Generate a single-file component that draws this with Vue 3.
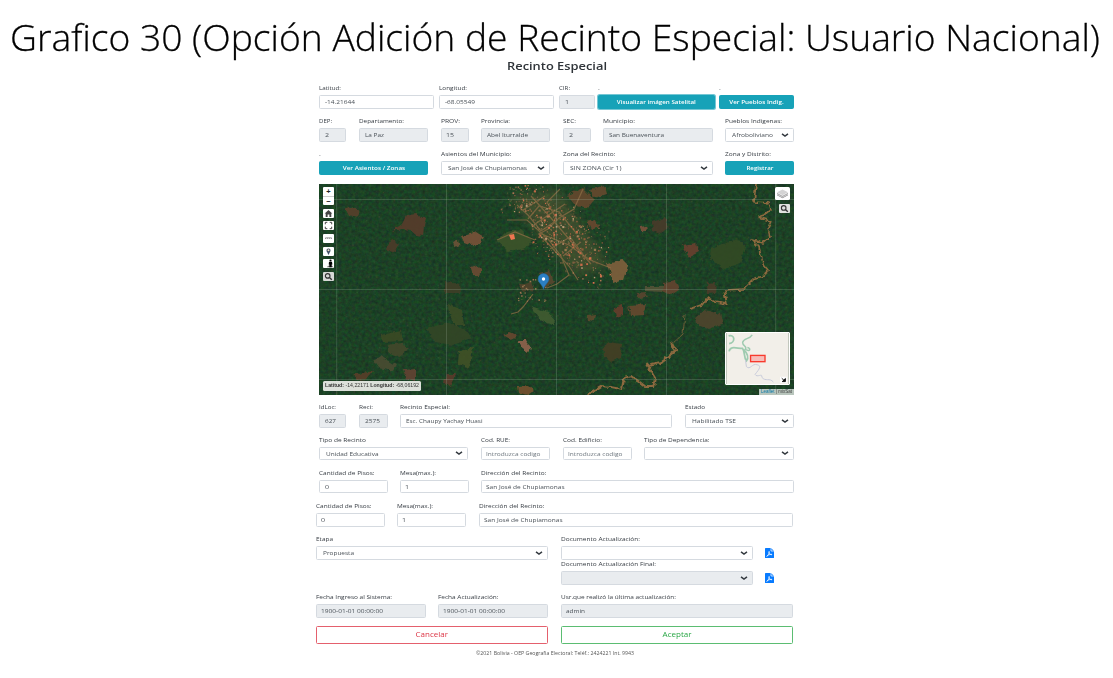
<script setup>
// Scales a text run horizontally so that it takes the given width.
const vFit = {
  mounted(el, { value }) {
    const w = el.getBoundingClientRect().width
    if (w) el.style.transform = `scaleX(${value ? value / w : 1.2})`
  }
}

// Fields: x and w are the column start and width; lw and vw are text widths.
const rows = [
  { y: 82, fields: [
    { x: 319, w: 115, label: 'Latitud:', lw: 22, value: '-14.21644', vw: 30 },
    { x: 439, w: 115, label: 'Longitud:', lw: 28, value: '-68.05549', vw: 30 },
    { x: 559, w: 36, label: 'CIR:', lw: 11, value: '1', off: true },
    { x: 598, w: 117, label: '.', value: 'Visualizar imágen Satelital', vw: 79, kind: 'btn', focus: true },
    { x: 718.5, w: 75.5, label: '.', value: 'Ver Pueblos Indig.', vw: 54.5, kind: 'btn' }
  ] },
  { y: 115, fields: [
    { x: 319, w: 27, label: 'DEP:', lw: 13, value: '2', off: true },
    { x: 359, w: 69, label: 'Departamento:', lw: 45, value: 'La Paz', vw: 19, off: true },
    { x: 440.5, w: 28, label: 'PROV:', lw: 19, value: '15', vw: 8, off: true },
    { x: 481, w: 69, label: 'Provincia:', lw: 29, value: 'Abel Iturralde', vw: 41, off: true },
    { x: 563, w: 28, label: 'SEC:', lw: 13, value: '2', off: true },
    { x: 603, w: 110, label: 'Municipio:', lw: 32, value: 'San Buenaventura', vw: 55, off: true },
    { x: 725.4, w: 68.5, label: 'Pueblos Indigenas:', lw: 57, value: 'Afroboliviano', vw: 41, kind: 'select' }
  ] },
  { y: 148, fields: [
    { x: 319, w: 109, label: '.', value: 'Ver Asientos / Zonas', vw: 62.5, kind: 'btn' },
    { x: 440.5, w: 109.5, label: 'Asientos del Municipio:', lw: 70.5, value: 'San José de Chupiamonas', vw: 79, kind: 'select' },
    { x: 563, w: 150, label: 'Zona del Recinto:', lw: 52.5, value: 'SIN ZONA (Cir 1)', vw: 51.5, kind: 'select' },
    { x: 725.4, w: 68.5, label: 'Zona y Distrito:', lw: 46, value: 'Registrar', vw: 27, kind: 'btn' }
  ] },
  { y: 401, fields: [
    { x: 319, w: 27, label: 'IdLoc:', lw: 17, value: '627', vw: 11, off: true },
    { x: 359, w: 28.5, label: 'Reci:', lw: 14, value: '2575', vw: 15, off: true },
    { x: 400, w: 272, label: 'Recinto Especial:', lw: 50, value: 'Esc. Chaupy Yachay Huasi', vw: 76.5 },
    { x: 685, w: 109, label: 'Estado', lw: 20, value: 'Habilitado TSE', vw: 44, kind: 'select' }
  ] },
  { y: 433.5, fields: [
    { x: 319, w: 149.4, label: 'Tipo de Recinto', lw: 47, value: 'Unidad Educativa', vw: 52.5, kind: 'select' },
    { x: 481, w: 69, label: 'Cod. RUE:', lw: 29, value: 'Introduzca codigo', vw: 54.5, hint: true },
    { x: 563, w: 69, label: 'Cod. Edificio:', lw: 39, value: 'Introduzca codigo', vw: 54.5, hint: true },
    { x: 644.4, w: 149.5, label: 'Tipo de Dependencia:', lw: 65.5, kind: 'select' }
  ] },
  { y: 466.5, fields: [
    { x: 319, w: 68.6, label: 'Cantidad de Pisos:', lw: 55.5, value: '0' },
    { x: 399.6, w: 69, label: 'Mesa(max.):', lw: 36, value: '1' },
    { x: 481, w: 313, label: 'Dirección del Recinto:', lw: 65.5, value: 'San José de Chupiamonas', vw: 78.5 }
  ] },
  { y: 500, fields: [
    { x: 315.6, w: 69, label: 'Cantidad de Pisos:', lw: 55.5, value: '0' },
    { x: 397, w: 69, label: 'Mesa(max.):', lw: 36, value: '1' },
    { x: 479, w: 314, label: 'Dirección del Recinto:', lw: 65.5, value: 'San José de Chupiamonas', vw: 78.5 }
  ] },
  { y: 533.4, fields: [
    { x: 315.6, w: 232, label: 'Etapa', lw: 17, value: 'Propuesta', vw: 31, kind: 'select' },
    { x: 561, w: 191.6, label: 'Documento Actualización:', lw: 79, kind: 'select', pdf: true }
  ] },
  { y: 558, fields: [
    { x: 561, w: 191.6, label: 'Documento Actualización Final:', lw: 95, kind: 'select', off: true, pdf: true }
  ] },
  { y: 591, fields: [
    { x: 315.6, w: 110, label: 'Fecha Ingreso al Sistema:', lw: 76, value: '1900-01-01 00:00:00', vw: 62, off: true },
    { x: 438, w: 110, label: 'Fecha Actualización:', lw: 60.5, value: '1900-01-01 00:00:00', vw: 62, off: true },
    { x: 561, w: 232, label: 'Usr.que realizó la última actualización:', lw: 115, value: 'admin', vw: 19, off: true }
  ] }
]
// Gaps between rows and between fields come from the starts and sizes above.
const H = 26.5
const layout = (list, from) => list.map((r, i) => {
  const prev = i ? list[i - 1].y + H : from
  let edge = 315
  const fields = r.fields.map(f => {
    const ml = f.x - edge
    edge = f.x + f.w
    return { ...f, ml }
  })
  return { fields, mt: r.y - prev }
})
const sections = [layout(rows.slice(0, 3), 82), layout(rows.slice(3), 394.5)]

// Seeded random source for the satellite texture.
let seed = 11
const rnd = () => ((seed = (seed * 16807) % 2147483647) / 2147483647)
const pick = a => a[Math.floor(rnd() * a.length)]
const houses = []
for (let i = 0; i < 560; i++) {
  const t = rnd()
  const x = 192 + t * 84 + (rnd() - 0.5) * 34
  const y = 14 + t * 62 + (rnd() - 0.5) * 56
  if (y < 1 || (x < 212 && y > 30)) continue
  houses.push({ x, y, s: 0.6 + rnd() * rnd() * 2, c: pick(['#a97652', '#c96b48', '#96784f', '#7d6040', '#b89a78', '#8f5c3c', '#d4714c', '#77623e']) })
}
for (let i = 0; i < 34; i++) houses.push({ x: 198 + rnd() * 30, y: 94 + rnd() * 24, s: 0.6 + rnd(), c: '#9a7650' })
const specks = Array.from({ length: 1300 }, () => ({ x: rnd() * 475, y: rnd() * 211, s: 0.5 + rnd() * 1.2, c: pick(['#2f6335', '#15351f', '#33552f', '#163822', '#4a4c30']) }))

const patches = [
  ['26,24 33,22 41,28 38,34 30,32', '#58402b'],
  ['73,47 83,40 87,32 96,30 107,34 105,42 104,52 97,51 91,46 84,45', '#583c2b'],
  ['66,65 73,56 80,60 76,68', '#4c3b29'],
  ['142,52 148,51 157,48 165,53 161,60 153,61 145,58', '#795239'],
  ['134,58 140,55 141,61 136,63', '#6d5338'],
  ['151,83 158,81 163,86 160,92 154,91', '#6c4b34'],
  ['126,98 141,100 142,109 126,109', '#3f3f27'],
  ['129,120 143,126 145,141 136,141 130,131', '#3b4d26'],
  ['108,144 130,139 147,146 153,154 134,161 115,158', '#334626'],
  ['62,151 82,147 84,157 63,158', '#3b4a24'],
  ['68,161 83,159 90,165 79,173 70,170', '#43482b'],
  ['55,177 62,172 77,181 74,187 60,184', '#4a4c32'],
  ['140,167 154,164 150,184 139,180', '#415126'],
  ['84,186 96,185 96,198 87,195', '#624333'],
  ['127,190 137,190 131,202 125,199', '#593b2b'],
  ['33,191 54,187 48,195 39,196', '#593e29'],
  ['184,151 191,148 198,151 193,156', '#67472f'],
  ['199,156 206,156 213,165 209,168 201,162', '#90634d'],
  ['199,202 209,201 216,207 210,211 200,209', '#76512f'],
  ['212,122 229,128 237,138 234,142 218,133', '#415c31'],
  ['178,57 187,48 202,46 213,56 207,64 190,68', '#3d542a'],
  ['220,89 231,86 235,99 226,104', '#59472f'],
  ['288,80 304,76 309,81 304,96 295,99 291,90', '#80603d'],
  ['248,11 264,4 275,15 268,24 255,20', '#65482d'],
  ['271,5 286,2 288,10 275,14', '#66492e'],
  ['268,38 277,36 280,43 272,46', '#69482f'],
  ['333,38 346,34 350,43 341,50 334,47', '#493b2a'],
  ['320,42 327,41 328,47 322,47', '#7b523c'],
  ['363,61 377,59 380,68 370,73', '#69402f'],
  ['392,64 401,61 418,55 426,62 421,79 405,85 391,74', '#334a24'],
  ['344,99 357,97 360,106 352,111 344,107', '#64442f'],
  ['326,103 344,103 344,108 326,107', '#545337'],
  ['309,121 328,120 325,131 311,132', '#67492f'],
  ['295,124 304,121 304,131 297,133', '#663d2c'],
  ['318,109 326,108 329,113 319,114', '#5a452f'],
  ['377,133 386,126 401,130 404,140 390,145 378,140', '#4f452d'],
  ['284,162 290,158 303,160 301,174 292,178 285,173', '#453f24'],
  ['388,99 397,98 396,109 389,110', '#4b3c29'],
  ['268,131 277,130 276,137 269,136', '#5b4a2d'],
  ['200,101 213,98 215,105 203,108', '#50432b']
]
const roads = [
  'M264 5L255 25L240 34L229 45L220 50L235 66L250 82L259 96',
  'M220 49L250 61L271 76L292 84', 'M198 21L209 31L222 47L238 36L228 18L241 5',
  'M188 36L208 36L229 55L242 72L250 91L238 100L228 104',
  'M209 35L220 22L240 28L258 50', 'M178 56L196 48L216 56', 'M214 110L204 123L199 128L192 130',
  'M231 65L251 53L264 70', 'M212 12L232 34L256 62L272 80', 'M204 26L226 12M216 40L246 20M244 72L262 58'
]
const river = 'M268 211L283 202L292 203L303 205L305 194L313 192L327 203L334 203L336 194L328 181L342 178L357 167L352 158'
const riverTop = 'M437 0L435 18L450 19L452 25L445 31L439 33L452 37L449 44L451 53L444 59L433 56L440 63L444 80L449 86L446 92L436 94L425 105L405 106L408 120L396 118L388 114L383 121L371 125'
</script>

<template>
  <div class="page">
    <h1><span v-fit="1090">Grafico 30 (Opción Adición de Recinto Especial: Usuario Nacional)</span></h1>
    <h2><span v-fit="100">Recinto Especial</span></h2>

    <main>
      <template v-for="(sec, si) in sections" :key="si">
        <div v-for="(r, ri) in sec" :key="ri" class="row" :style="{ marginTop: r.mt + 'px' }">
          <template v-for="(f, fi) in r.fields" :key="fi">
            <div class="field" :style="{ marginLeft: f.ml + 'px', width: f.w + 'px' }">
              <label><span v-fit="f.lw">{{ f.label }}</span></label>
              <div class="control" :class="[f.kind, { off: f.off, hint: f.hint, focus: f.focus }]">
                <span v-fit="f.vw">{{ f.value }}</span>
                <svg v-if="f.kind === 'select'" class="chev" viewBox="0 0 8 6"><path d="M1 1.8L4 4L7 1.8" /></svg>
              </div>
            </div>
            <svg v-if="f.pdf" class="pdf" viewBox="0 0 9 10">
              <path d="M.6 0H6L9 3V9.400Q9 10 8.400 10H.6Q0 10 0 9.400V.6Q0 0 .6 0Z" fill="#087bff" />
              <path d="M6 0V3H9" fill="none" stroke="#fff" stroke-width=".7" />
              <path d="M1.700 8.300C3 7.700 4.700 4.700 4.200 3.500C3.400 3.200 3.600 6.500 7 6.800C7.200 5.800 4 6.200 1.700 8.300Z" fill="none" stroke="#fff" stroke-width=".75" />
            </svg>
          </template>
        </div>

        <div v-if="si === 0" class="map">
          <svg class="ground" viewBox="0 0 475 211" preserveAspectRatio="none">
            <defs>
              <filter id="forest" x="0" y="0" width="100%" height="100%" color-interpolation-filters="sRGB">
                <feTurbulence type="fractalNoise" baseFrequency="0.3" numOctaves="4" seed="4" />
                <feColorMatrix values=".1 0 0 0 .06  0 .17 0 0 .17  0 0 .08 0 .105  0 0 0 0 1" />
              </filter>
              <filter id="rough" x="-5%" y="-5%" width="110%" height="110%" color-interpolation-filters="sRGB">
                <feTurbulence type="fractalNoise" baseFrequency="0.2" numOctaves="2" seed="8" result="n" />
                <feDisplacementMap in="SourceGraphic" in2="n" scale="5" xChannelSelector="R" yChannelSelector="G" />
                <feGaussianBlur stdDeviation=".6" />
              </filter>
              <filter id="soft" color-interpolation-filters="sRGB"><feGaussianBlur stdDeviation=".45" /></filter>
              <filter id="haze" color-interpolation-filters="sRGB"><feGaussianBlur stdDeviation="5" /></filter>
            </defs>
            <rect width="475" height="211" fill="#1d4126" />
            <rect width="475" height="211" filter="url(#forest)" />
            <g filter="url(#soft)" opacity=".45">
              <rect v-for="(s, i) in specks" :key="i" :x="s.x" :y="s.y" :width="s.s" :height="s.s" :fill="s.c" />
            </g>
            <path d="M190 12L240 6L290 82L258 92L214 44Z" fill="#5d5a35" opacity=".5" filter="url(#haze)" />
            <g filter="url(#rough)" opacity=".9">
              <polygon v-for="(p, i) in patches" :key="i" :points="p[0]" :fill="p[1]" />
            </g>
            <g fill="none" stroke="#8d6d45" stroke-width="1.200" opacity=".75" filter="url(#soft)">
              <path v-for="(d, i) in roads" :key="i" :d="d" />
            </g>
            <g fill="none" stroke="#8c693f" stroke-linejoin="round" filter="url(#rough)">
              <path :d="river" stroke-width="2.200" />
              <path :d="riverTop" stroke-width="1.700" />
              <path d="M366 131L364 150L352 161" stroke-width=".7" />
            </g>
            <g filter="url(#soft)">
              <rect v-for="(s, i) in houses" :key="i" :x="s.x" :y="s.y" :width="s.s" :height="s.s" :fill="s.c" />
              <path d="M190 51l5-1 1 5-4 1z" fill="#ef7550" />
            </g>
            <path d="M17.700 0V211M127.500 0V211M237.500 0V211M347.500 0V211M456.700 0V211M0 15.500H475M0 105.500H475M0 195.500H475" stroke="#aec0ae" stroke-opacity=".22" />
            <path d="M224.500 105.500C223 100 219 98.500 219 95A5.500 5.500 0 0 1 230 95C230 98.500 226 100 224.500 105.500Z" fill="#2b7fc3" stroke="#216597" stroke-width=".5" />
            <circle cx="224.500" cy="95" r="1.700" fill="#fff" />
          </svg>

          <div class="tools">
            <div class="tool zoom"><i>+</i><i>−</i></div>
            <div class="tool"><svg viewBox="0 0 11 9"><path d="M5.500 1L9.300 4.500H8.300V8H6.400V5.500H4.600V8H2.700V4.500H1.700Z" fill="#444" /></svg></div>
            <div class="tool"><svg viewBox="0 0 11 9"><path d="M2.300 3.300V1.300H4.300M6.700 1.300H8.700V3.300M8.700 5.700V7.700H6.700M4.300 7.700H2.300V5.700" fill="none" stroke="#444" /></svg></div>
            <div class="tool"><svg viewBox="0 0 11 9"><path d="M2.500 4.900V3.900H8.500V4.900M4.500 3.900V4.700M6.500 3.900V4.700" fill="none" stroke="#777" stroke-width=".8" /></svg></div>
            <div class="tool"><svg viewBox="0 0 11 9"><path d="M5.500 8L3.700 4.300A2 2 0 1 1 7.300 4.300Z" fill="#3b4b63" /><circle cx="5.500" cy="3.300" r="1" fill="#f2dfc0" /></svg></div>
            <div class="tool"><svg viewBox="0 0 11 9"><path d="M4 8.300L5 6.800H9.500L10 8.300Z" fill="#777" /><circle cx="7.500" cy="1.500" r="1.100" /><path d="M6 2.700H9L9.400 5.600H8.700V8.300H6.300V5.600H5.700Z" /></svg></div>
            <div class="tool grey"><svg viewBox="0 0 11 9"><circle cx="4.700" cy="3.900" r="2.300" fill="none" stroke="#333" stroke-width="1.200" /><path d="M6.400 5.500L8.800 7.800" stroke="#333" stroke-width="1.400" /></svg></div>
          </div>

          <div class="layers"><svg viewBox="0 0 15 13">
            <path d="M2 7.500L7.500 10.500L13 7.500V8.200L7.500 11.200L2 8.200Z" fill="#888" />
            <path d="M2 5.800L7.500 8.800L13 5.800V7.300L7.500 10.200L2 7.300Z" fill="#b2b2b2" />
            <path d="M2 5.200L7.500 2.400L13 5.200L7.500 8.300Z" fill="#d4d4d4" /></svg></div>
          <div class="find"><svg viewBox="0 0 11 9"><circle cx="4.700" cy="3.900" r="2.300" fill="none" stroke="#333" stroke-width="1.100" /><path d="M6.400 5.500L8.800 7.800" stroke="#333" stroke-width="1.400" /></svg></div>

          <div class="coords"><span v-fit="94"><b>Latitud:</b> -14,22171 <b>Longitud:</b> -68,06192</span></div>
          <div class="mini"><svg viewBox="0 0 65 53">
            <rect width="65" height="53" fill="#f2efe9" />
            <g fill="none" stroke="#9fcbb0" stroke-width="1.800">
              <path d="M2.500 3C9 1 10 10 3 11M3 19C4 13 11 16 17 16C20 20 18 26 21 29C24 25 22 21 18 17" />
              <path d="M27 2C24 7 18 5 17 10C17 14 22 13 20 17C25 20 26 16 22 15" stroke-width="1.500" />
            </g>
            <path d="M20 28L21 35C25 39 27 31 32 33C38 34 33 39 30 43C32 47 38 41 37 46C41 51 45 46 49 51" fill="none" stroke="#c7cada" />
            <rect x="25.300" y="23.300" width="15" height="6.500" fill="#f7bcb8" stroke="#f83a2d" stroke-width="1.400" />
            <rect x="56" y="45.500" width="7" height="6.500" fill="#fff" />
            <path d="M57.700 47L60.500 49.700M61.500 47.300V50.500H58.200Z" fill="#111" stroke="#111" />
          </svg></div>
          <div class="credit"><span v-fit="31"><em>Leaflet</em> | mixSat</span></div>
        </div>
      </template>

      <div class="actions">
        <button class="cancel"><span v-fit="32.5">Cancelar</span></button>
        <button class="accept"><span v-fit="29">Aceptar</span></button>
      </div>
      <footer><span v-fit="158">©2021 Bolivia - OEP Geografia Electoral: Teléf.: 2424221 Int. 9943</span></footer>
    </main>
  </div>
</template>

<style>
body { background: #fff; }
</style>

<style scoped>
.page { width: 1113px; height: 678px; overflow: hidden; background: #fff; font-family: "Open Sans", "Noto Sans", sans-serif; color: #353b42; }
* { box-sizing: border-box; }
span { display: inline-block; white-space: pre; transform-origin: left center; }
h1 { margin: 0; height: 60px; padding: 15px 0 0 10px; font: 300 37px/44px "Open Sans", sans-serif; color: #000; white-space: nowrap; -webkit-text-stroke: .3px #000; }
h2 { margin: 0; height: 22px; padding-left: 506.500px; font-size: 10.500px; line-height: 13px; font-weight: 600; color: #2f3439; }
main { width: 479px; margin-left: 315px; }
.row { display: flex; height: 26.500px; }
.field { flex: none; }
label { display: block; height: 13px; font-size: 5.900px; line-height: 13px; white-space: nowrap; }
.control { position: relative; height: 13.500px; border: 1px solid #d5dae0; border-radius: 1.500px; padding-left: 4.500px; font-size: 5.900px; line-height: 12px; color: #495057; background: #fff; white-space: nowrap; }
.off { background: #e9ecef; }
.hint { color: #6c757d; }
.select { padding-left: 6px; }
.btn { background: #17a2b8; border-color: #17a2b8; color: #fff; font-weight: 600; text-align: center; padding: 0; }
.btn span { transform-origin: center; }
.focus { box-shadow: 0 0 0 1px #76c7d4; }
.chev { position: absolute; right: 4px; top: 2.800px; width: 8px; height: 6px; fill: none; stroke: #343a40; stroke-width: 1.500; }
.pdf { flex: none; width: 9px; height: 10px; margin: 15px 0 0 12.500px; }
.map { position: relative; margin: 9px 0 0 4px; width: 475px; height: 211px; overflow: hidden; }
.ground { display: block; width: 475px; height: 211px; }
.tools { position: absolute; left: 4px; top: 3.500px; display: flex; flex-direction: column; gap: 3.700px; }
.tool { width: 11px; height: 9px; background: #fff; border-radius: 1px; }
.tool svg, .layers svg, .find svg { display: block; width: 100%; height: 100%; }
.zoom { height: 18px; }
.zoom i { display: block; height: 9px; font: bold 7.500px/9px "Liberation Sans", sans-serif; text-align: center; color: #222; }
.zoom i + i { border-top: .5px solid #ccc; }
.grey { background: #d7d9d6; }
.layers { position: absolute; right: 4px; top: 3.500px; width: 15px; height: 13px; border-radius: 1.500px; background: #fff; }
.find { position: absolute; right: 4px; top: 20px; width: 11px; height: 9px; border-radius: 1px; background: #e1e2df; }
.coords { position: absolute; left: 4px; bottom: 4px; width: 98px; height: 9.500px; padding-left: 2px; border-radius: 1.500px; background: #dce0da; font: 5.500px/9.500px "Liberation Sans", sans-serif; color: #333; }
.mini { position: absolute; right: 4px; bottom: 9.500px; width: 65px; height: 53px; border: 1px solid #fff; border-radius: 1px; overflow: hidden; }
.mini svg { display: block; width: 63px; height: 51px; }
.credit { position: absolute; right: 0; bottom: 0; width: 35px; height: 6px; padding-left: 2px; background: #b8c5bc; font: 4.500px/6px "Liberation Sans", sans-serif; color: #444; }
.credit em { font-style: normal; color: #0878a8; }
.actions { display: flex; gap: 13px; margin: 8px 0 0 .6px; }
button { height: 18px; padding: 0; border: 1px solid; border-radius: 1.500px; background: #fff; font: 7.800px/15px "Open Sans", sans-serif; }
button span { transform-origin: center; }
.cancel { width: 232.400px; color: #dc3545; border-color: #e4606d; }
.accept { width: 232px; color: #28a745; border-color: #5bbd72; }
footer { margin: 4px 0 0 160.500px; font-size: 4.600px; line-height: 10px; color: #555; white-space: nowrap; }
</style>
